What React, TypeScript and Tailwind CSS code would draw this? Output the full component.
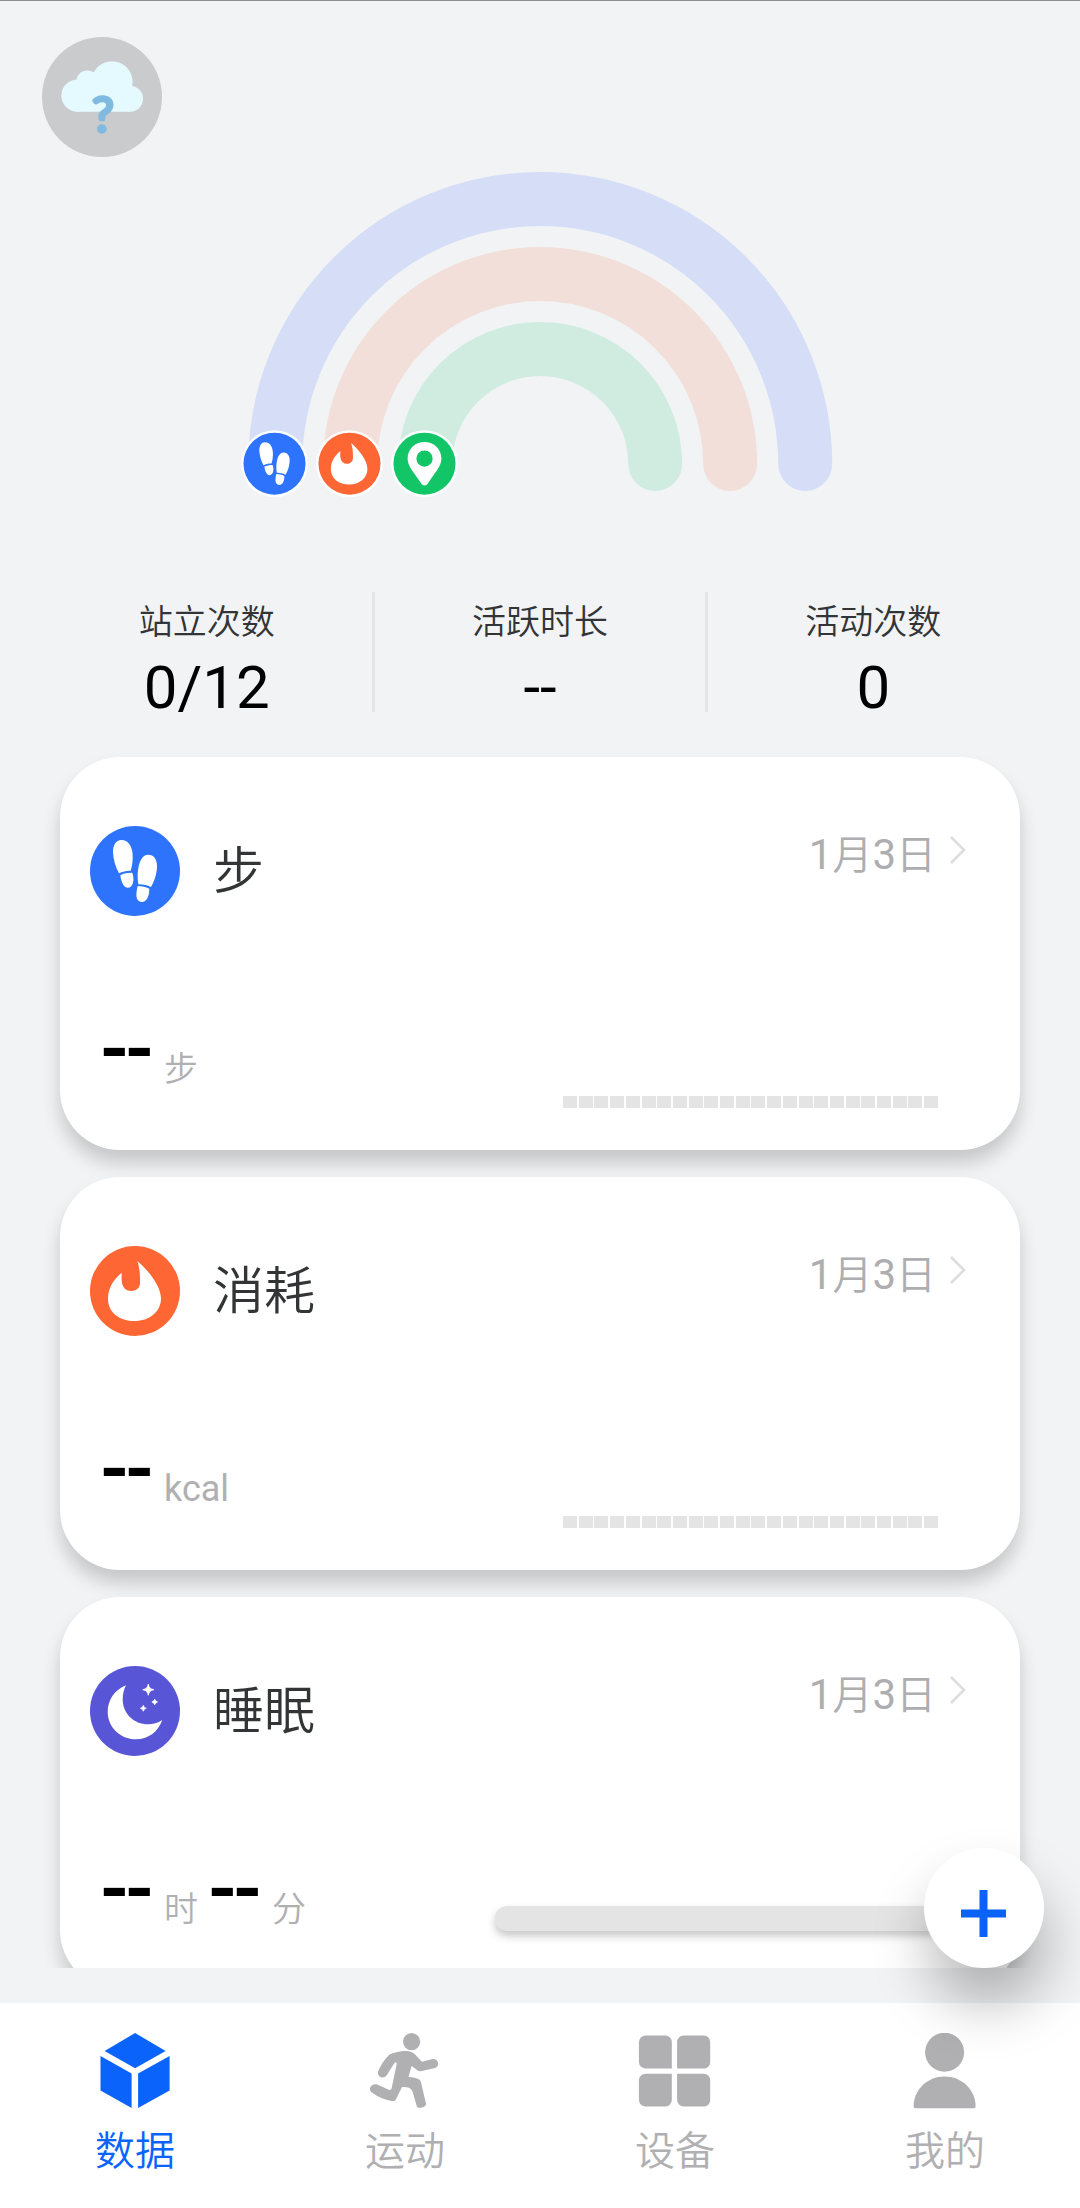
import { useState } from 'react'
import type { ReactNode } from 'react'
import clsx from 'clsx'

type TabId = 'data' | 'sport' | 'device' | 'mine'

/* ---------- glyphs, all drawn on a 90x90 grid ---------- */

function StepsGlyph() {
  return (
    <g fill="#fff">
      <path d="M31.500 14C38 14 42 20 42.600 28C43 34 42.400 39 40.700 44.700C36.500 44.500 32.500 45.500 29 47.300C25.500 41 23.200 33 23 26C22.900 19 26 14 31.500 14Z" />
      <path d="M30.300 49.200C34 47.500 38 46.700 42.200 46.800C43.300 49.500 43.700 52.500 43.300 55C42.700 59 41 61.700 38 61.700C33.500 61.700 31.200 55.500 30.300 49.200Z" />
      <path d="M58 28.700C63.500 28.500 67 33 67 40C67 47.500 64.500 55 61 61C57 59 52.700 58 48.300 58.200C47.300 52 47.500 45.500 48.700 40C50.500 33 53.500 28.900 58 28.700Z" />
      <path d="M47.700 60C51.800 60 55.700 61 59.300 62.700C59.300 66 59 69 57.500 72C56 74.800 54 76 51.700 75.900C48.300 75.700 46.500 73 46.400 69.500C46.300 66 47 63 47.700 60Z" />
    </g>
  )
}

function FlameGlyph() {
  return (
    <path
      fill="#fff"
      d="M47.300 15C58 24 71 40 71 52.500C71 66 59 75 44.500 75C30 75 18 67 18 52.500C18 41 25 32 31.700 26.700C31.500 31 31.500 34 32 37C33 42 36.500 45 41 45C46 45 50 42 50 37C50.200 28 49.500 21 47.300 15Z"
    />
  )
}

function MoonGlyph() {
  return (
    <g fill="#fff">
      <path d="M36 19.300C24.500 24 17.700 34 17.700 46C17.700 61 30 73.300 46 73.300C58 73.300 68 66 72.300 54C68 57 63 58.300 58 58.300C44 58.300 32.700 47.500 32.700 33.500C32.700 28 34 23 36 19.300Z" />
      <path d="M58.300 18.200Q58.900 23.100 63.800 23.700Q58.900 24.300 58.300 29.200Q57.700 24.300 52.800 23.700Q57.700 23.100 58.300 18.200Z" stroke="#fff" strokeWidth="1" />
      <path d="M64.700 33.200Q65.300 35.400 67.500 36Q65.300 36.600 64.700 38.800Q64.100 36.600 61.900 36Q64.100 35.400 64.700 33.200Z" stroke="#fff" strokeWidth=".8" />
      <path d="M53.300 39.300Q53.900 41.700 56.300 42.300Q53.900 42.900 53.300 45.300Q52.700 42.900 50.300 42.300Q52.700 41.700 53.300 39.300Z" stroke="#fff" strokeWidth=".6" />
    </g>
  )
}

function PinGlyph() {
  return (
    <path
      fill="#fff"
      fillRule="evenodd"
      d="M45 13.500C31 13.500 20.500 24 20.500 37.500C20.500 49 30 58 40 73.500C42 77.500 48 77.500 50 73.500C60 58 69.500 49 69.500 37.500C69.500 24 59 13.500 45 13.500ZM45 25.700A11.800 11.800 0 1 1 45 49.300A11.800 11.800 0 1 1 45 25.700Z"
    />
  )
}

function RoundIcon({ color, children }: { color: string; children: ReactNode }) {
  return (
    <svg className="size-[90px] shrink-0" viewBox="0 0 90 90">
      <circle cx="45" cy="45" r="45" fill={color} />
      {children}
    </svg>
  )
}

/* ---------- header ---------- */

function WeatherBadge() {
  return (
    <svg className="size-[120px]" viewBox="0 0 120 120">
      <circle cx="60" cy="60" r="60" fill="#cacbcd" />
      <g fill="#e5faff">
        <circle cx="35.500" cy="58.600" r="16.200" />
        <circle cx="45.300" cy="44.500" r="11" />
        <circle cx="70" cy="44.800" r="20.600" />
        <circle cx="88" cy="61.700" r="13" />
        <path d="M35 42H70L88 60V74.700H35Z" />
      </g>
      <text
        x="61"
        y="94.800"
        textAnchor="middle"
        fontFamily="Lato, sans-serif"
        fontSize="49"
        fill="#80bae0"
        stroke="#80bae0"
        strokeWidth="3.400"
        strokeLinejoin="round"
      >
        ?
      </text>
    </svg>
  )
}

const RINGS = [
  { r: 265, track: '#d5def6', color: '#2e73fc', glyph: <StepsGlyph /> },
  { r: 190, track: '#f3dfd9', color: '#fe6733', glyph: <FlameGlyph /> },
  { r: 115, track: '#d0ece0', color: '#12c567', glyph: <PinGlyph /> },
]

function ActivityRainbow() {
  return (
    <svg className="mx-auto mt-[5px] h-[340px] w-[620px] shrink-0" viewBox="0 0 620 340">
      {RINGS.map(ring => (
        <path
          key={ring.r}
          d={`M${310.200 - ring.r} 302A${ring.r} ${ring.r} 0 0 1 ${310.200 + ring.r} 302`}
          fill="none"
          stroke={ring.track}
          strokeWidth="54"
          strokeLinecap="round"
        />
      ))}
      {RINGS.map(ring => (
        <g key={ring.r} transform={`translate(${309.500 - ring.r} 301.700)`}>
          <circle r="33.500" fill="#fbfdfe" />
          <circle r="31" fill={ring.color} />
          <g transform="scale(.69) translate(-45 -45)">{ring.glyph}</g>
        </g>
      ))}
    </svg>
  )
}

const STATS = [
  { label: '站立次数', value: '0/12' },
  { label: '活跃时长', value: '--' },
  { label: '活动次数', value: '0' },
]

function StatsRow() {
  return (
    <div className="mx-10 mt-[90px] grid h-[120px] shrink-0 grid-cols-3">
      {STATS.map(s => (
        <div
          key={s.label}
          className="flex flex-col items-center border-[#e4e5e6] pt-[5px] not-first:-ml-[1.5px] not-first:border-l-[3px] not-first:pr-[1.5px]"
        >
          <span className="text-[34px] leading-[50px] font-[350] text-[#333436]">{s.label}</span>
          <span className="mt-[18px] text-[60px] leading-[46px] text-black">{s.value}</span>
        </div>
      ))}
    </div>
  )
}

/* ---------- cards ---------- */

function HourBars() {
  return (
    <div className="mr-[82px] mb-[42px] flex h-3 w-[375px] gap-[1.700px]">
      {Array.from({ length: 24 }, (_, i) => (
        <div key={i} className="flex-1 bg-[#e4e4e4]" />
      ))}
    </div>
  )
}

function SleepBar() {
  return <div className="mr-[60px] mb-[59px] h-[25px] w-[465px] rounded-xl bg-[#e4e4e4] shadow-[0_5px_8px_rgba(0,0,0,0.22)]" />
}

const CARDS = [
  { title: '步', color: '#2e73fc', glyph: <StepsGlyph />, units: ['步'], chart: <HourBars /> },
  { title: '消耗', color: '#fe6733', glyph: <FlameGlyph />, units: ['kcal'], chart: <HourBars /> },
  { title: '睡眠', color: '#5856d6', glyph: <MoonGlyph />, units: ['时', '分'], chart: <SleepBar /> },
]

function MetricCard({ title, color, glyph, units, chart }: (typeof CARDS)[number]) {
  return (
    <section className="flex h-[393px] shrink-0 flex-col rounded-[60px] bg-white shadow-[0_13px_18px_rgba(0,0,0,0.18)]">
      <header className="flex h-[159px] items-start pt-[69px] pl-[30px]">
        <RoundIcon color={color}>{glyph}</RoundIcon>
        <h2 className="ml-[33px] pt-[9px] text-[51px] leading-[74px] font-[350] text-[#333436]">{title}</h2>
        <div className="-mt-px mr-[53px] ml-auto flex items-start">
          <span className="text-[42px] leading-[60px] text-[#aeaeb0]">
            1<span className="text-[40px] font-[350]">月</span>3<span className="text-[40px] font-[350]">日</span>
          </span>
          <svg className="mt-[9px] ml-[13px] h-[32px] w-[18px]" viewBox="0 0 18 32">
            <path d="M2 3L15 16L2 29" fill="none" stroke="#dcdcdd" strokeWidth="2.500" />
          </svg>
        </div>
      </header>
      <div className="flex flex-1 items-end justify-between">
        <div className="mb-[56px] flex items-start pl-[40px]">
          {units.map(unit => (
            <div key={unit} className="flex items-start">
              <span className="w-[50px] text-[79px] leading-[60px] font-semibold tracking-[-4px] text-black">--</span>
              <span
                className={clsx(
                  'mr-[10px] ml-[14px] pt-[25px] leading-[50px] text-[#b0b0b2]',
                  unit === 'kcal' ? 'text-[36px]' : 'text-[34px] font-[350]',
                )}
              >
                {unit}
              </span>
            </div>
          ))}
        </div>
        {chart}
      </div>
    </section>
  )
}

/* ---------- bottom bar ---------- */

const TABS: { id: TabId; label: string; icon: ReactNode }[] = [
  {
    id: 'data',
    label: '数据',
    icon: <path d="M37.500 0L68 18L37.500 35.200L7 18ZM2.900 23L34 40.500V75L2.900 57.500ZM72 23L40.500 40.500V75L72 57.500Z" />,
  },
  {
    id: 'sport',
    label: '运动',
    icon: (
      <>
        <circle cx="44" cy="8.600" r="8.600" />
        <path d="M25 20.200C30 18.500 35 18 39 18C43 18.200 45.500 19.500 48 22L54.300 28.700L65 26C71 25.500 72.500 33 67.500 35L53 38.300C51.500 38.300 50.500 37.800 49.500 37L44 33L40.900 44C45 44 49 45 51.500 46.500C53 47.500 53.500 49 53.800 51L58.500 71C58.500 74 51 76.500 49.300 73.500L44.800 58C43 54.500 39 53.800 34.400 54L28.500 66C27.500 68 26 68.400 24 68.100C17 67 10 63.500 4.200 59.500C0 56 3.500 50.500 9 51.300L21.200 56.800C22.600 57.200 23.500 56.800 24 55.500L29.200 30.500C28.800 29 27.500 29 26.700 30.300L19 42.500C16 46.500 9 43.800 10.500 38.500C13.500 31.500 17 26 21.200 22.200C22.300 21.200 23.500 20.700 25 20.200Z" />
      </>
    ),
  },
  {
    id: 'device',
    label: '设备',
    icon: (
      <path d="M8.300 2.500H28A6.500 6.500 0 0 1 34.200 9V35.500H8.300A6.800 6.800 0 0 1 1.300 29V9A6.800 6.800 0 0 1 8.300 2.500ZM46 2.500H66A6.500 6.500 0 0 1 72.600 9V29A6.500 6.500 0 0 1 66 35.500H39.500V9A6.500 6.500 0 0 1 46 2.500ZM8.300 40.700H34.200V67A6.500 6.500 0 0 1 28 73.500H8.300A6.800 6.800 0 0 1 1.300 67V47.500A6.800 6.800 0 0 1 8.300 40.700ZM39.500 40.700H66A6.500 6.500 0 0 1 72.600 47.500V67A6.500 6.500 0 0 1 66 73.500H46A6.500 6.500 0 0 1 39.500 67Z" />
    ),
  },
  {
    id: 'mine',
    label: '我的',
    icon: (
      <>
        <circle cx="37" cy="19.300" r="19.500" />
        <path d="M37 43.500C54.500 43.500 68 57 68 73.500Q68 75.200 66.500 75.200H7.500Q6 75.200 6 73.500C6 57 19.500 43.500 37 43.500Z" />
      </>
    ),
  },
]

function TabBar({ tab, onChange }: { tab: TabId; onChange: (id: TabId) => void }) {
  return (
    <nav className="grid h-[205px] shrink-0 grid-cols-4 bg-white">
      {TABS.map(t => (
        <button
          key={t.id}
          onClick={() => onChange(t.id)}
          className={clsx(
            'flex flex-col items-center pt-[30px]',
            tab === t.id ? 'text-[#0a64fb]' : 'text-[#b0b0b2]',
          )}
        >
          <svg className="h-[76px] w-[75px]" viewBox=".4 0 75 76" fill="currentColor">
            {t.icon}
          </svg>
          <span className="mt-[14px] text-[40px] leading-[58px] font-[350]">{t.label}</span>
        </button>
      ))}
    </nav>
  )
}

export default function App() {
  const [tab, setTab] = useState<TabId>('data')

  return (
    <div className="relative flex h-[2208px] w-[1080px] flex-col overflow-hidden bg-[#f1f3f5] font-['Roboto','Noto_Sans_CJK_SC',sans-serif]">
      <main className="flex h-[1968px] shrink-0 flex-col overflow-hidden border-t border-[#8e8c90]">
        <div className="shrink-0 pt-[36px] pl-[42px]">
          <WeatherBadge />
        </div>
        <ActivityRainbow />
        <StatsRow />
        <div className="mx-[60px] mt-[45px] flex shrink-0 flex-col gap-[27px]">
          {CARDS.map(card => (
            <MetricCard key={card.title} {...card} />
          ))}
        </div>
      </main>
      <div className="h-[35px] shrink-0" />
      <TabBar tab={tab} onChange={setTab} />

      {/* Floating add button */}
      <button className="absolute right-[36px] bottom-[240px] flex size-[120px] items-center justify-center rounded-full bg-white pt-[11px] pr-[1px] shadow-[4px_36px_56px_rgba(0,0,0,0.28)]">
        <svg className="size-[47px]" viewBox="0 0 47 47">
          <path d="M23.500 0V47M1 23.500H46" stroke="#0a62f7" strokeWidth="8" />
        </svg>
      </button>
    </div>
  )
}
